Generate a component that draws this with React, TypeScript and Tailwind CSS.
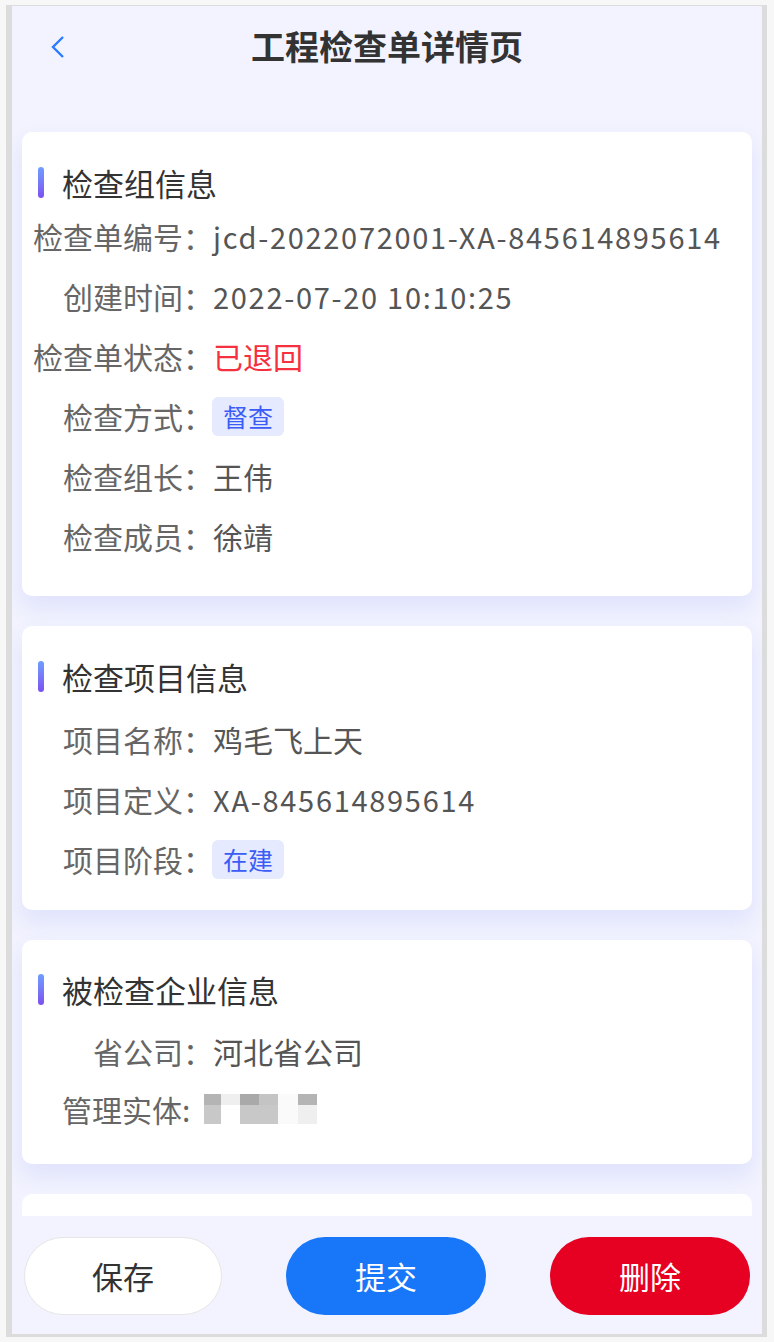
import React from 'react'

type Row = {
  label: string
  value?: string
  kind?: 'text' | 'latin' | 'red' | 'tag' | 'blur'
}

const font = { fontFamily: '"Noto Sans CJK SC", "Liberation Sans", sans-serif' }

function Heading({ title }: { title: string }) {
  return (
    <div className="flex h-[36px] items-center">
      <span className="ml-[16px] h-[31px] w-[6px] rounded-[3px] bg-gradient-to-b from-[#6e9dff] to-[#7b4ff0]" />
      <span className="ml-[18px] text-[31px] leading-none text-[#333]">{title}</span>
    </div>
  )
}

function Blurred() {
  return (
    <span className="flex h-[30px] flex-col">
      <span className="flex h-[11px]">
        <span className="w-[17px] bg-[#b4b4b4]" />
        <span className="w-[19px] bg-[#efefef]" />
        <span className="w-[19px] bg-[#a9a9a9]" />
        <span className="w-[19px] bg-[#c4c4c4]" />
        <span className="w-[20px] bg-[#fafafa]" />
        <span className="w-[19px] bg-[#b4b4b4]" />
      </span>
      <span className="flex h-[19px]">
        <span className="w-[17px] bg-[#c8c8c8]" />
        <span className="w-[19px] bg-white" />
        <span className="w-[38px] bg-[#c8c8c8]" />
        <span className="w-[20px] bg-[#fafafa]" />
        <span className="w-[19px] bg-[#efefef]" />
      </span>
    </span>
  )
}

function Value({ row }: { row: Row }) {
  if (row.kind === 'tag')
    return (
      <span className="ml-[-1px] rounded-[6px] bg-[#e5eaff] px-[11px] py-[5px] text-[25px] leading-[29px] text-[#3b5cf6]">
        {row.value}
      </span>
    )
  if (row.kind === 'red') return <span className="text-[30px] leading-none text-[#f5303f]">{row.value}</span>
  if (row.kind === 'blur')
    return (
      <span className="ml-[14px]">
        <Blurred />
      </span>
    )
  if (row.kind === 'latin')
    return <span className="text-[29px] leading-none tracking-[1.7px] text-[#555]">{row.value}</span>
  return <span className="text-[30px] leading-none text-[#555]">{row.value}</span>
}

function InfoRow({ row, h }: { row: Row; h: string }) {
  return (
    <div className={`flex items-center ${h}`}>
      {row.kind === 'blur' ? (
        <span className="ml-[40px] text-[30px] leading-none text-[#666]">{row.label}</span>
      ) : (
        <span className="w-[191px] shrink-0 text-right text-[30px] leading-none text-[#666]">{row.label}</span>
      )}
      <Value row={row} />
    </div>
  )
}

function Card({
  title,
  rows,
  top,
  gap,
  rowH,
  bottom,
}: {
  title: string
  rows: Row[]
  top: string
  gap: string
  rowH: string
  bottom: string
}) {
  return (
    <section className={`mx-[10px] rounded-[10px] bg-white shadow-[0_12px_22px_rgba(90,110,235,0.12)] ${top} ${bottom}`}>
      <Heading title={title} />
      <div className={gap}>
        {rows.map((r) => (
          <InfoRow key={r.label} row={r} h={rowH} />
        ))}
      </div>
    </section>
  )
}

const group: Row[] = [
  { label: '检查单编号：', value: 'jcd-2022072001-XA-845614895614', kind: 'latin' },
  { label: '创建时间：', value: '2022-07-20 10:10:25', kind: 'latin' },
  { label: '检查单状态：', value: '已退回', kind: 'red' },
  { label: '检查方式：', value: '督查', kind: 'tag' },
  { label: '检查组长：', value: '王伟' },
  { label: '检查成员：', value: '徐靖' },
]

const project: Row[] = [
  { label: '项目名称：', value: '鸡毛飞上天' },
  { label: '项目定义：', value: 'XA-845614895614', kind: 'latin' },
  { label: '项目阶段：', value: '在建', kind: 'tag' },
]

const company: Row[] = [
  { label: '省公司：', value: '河北省公司' },
  { label: '管理实体:', kind: 'blur' },
]

export default function App() {
  return (
    <div className="h-[1342px] w-[774px] bg-[#f7f7f7] pl-[6px] pt-[5px]" style={font}>
      <div className="flex h-[1332px] w-[761px] flex-col overflow-hidden border-t border-r-[5px] border-b-[3px] border-l-[6px] border-[#dcdcdc] bg-[#f2f3fe]">
        <header className="relative flex h-[80px] shrink-0 items-center justify-center">
          <svg
            className="absolute left-[38px] top-[29px]"
            width="16"
            height="24"
            viewBox="0 0 16 24"
            fill="none"
            stroke="#2a7bff"
            strokeWidth="2.4"
          >
            <path d="M13 2 L3 12 L13 22" />
          </svg>
          <h1 className="text-[34px] font-bold leading-none text-[#333]">工程检查单详情页</h1>
        </header>

        <main className="flex min-h-0 flex-1 flex-col gap-[30px] overflow-hidden pt-[46px]">
          <Card title="检查组信息" rows={group} top="pt-[32px]" gap="mt-[6px]" rowH="h-[60px]" bottom="pb-[30px]" />
          <Card title="检查项目信息" rows={project} top="pt-[32px]" gap="mt-[15px]" rowH="h-[60px]" bottom="pb-[21px]" />
          <Card title="被检查企业信息" rows={company} top="pt-[31px]" gap="mt-[15px]" rowH="h-[58px]" bottom="pb-[26px]" />
          <section className="mx-[10px] h-[120px] shrink-0 rounded-[10px] bg-white" />
        </main>

        <footer className="flex h-[118px] shrink-0 items-start justify-between bg-[#f2f3fe] px-[12px] pt-[21px]">
          <button className="h-[78px] w-[198px] rounded-full border border-[#e6e6e6] bg-white text-[31px] text-[#333]">
            保存
          </button>
          <button className="h-[78px] w-[200px] rounded-full bg-[#1877f9] text-[31px] text-white">提交</button>
          <button className="h-[78px] w-[200px] rounded-full bg-[#e60021] text-[31px] text-white">删除</button>
        </footer>
      </div>
    </div>
  )
}
